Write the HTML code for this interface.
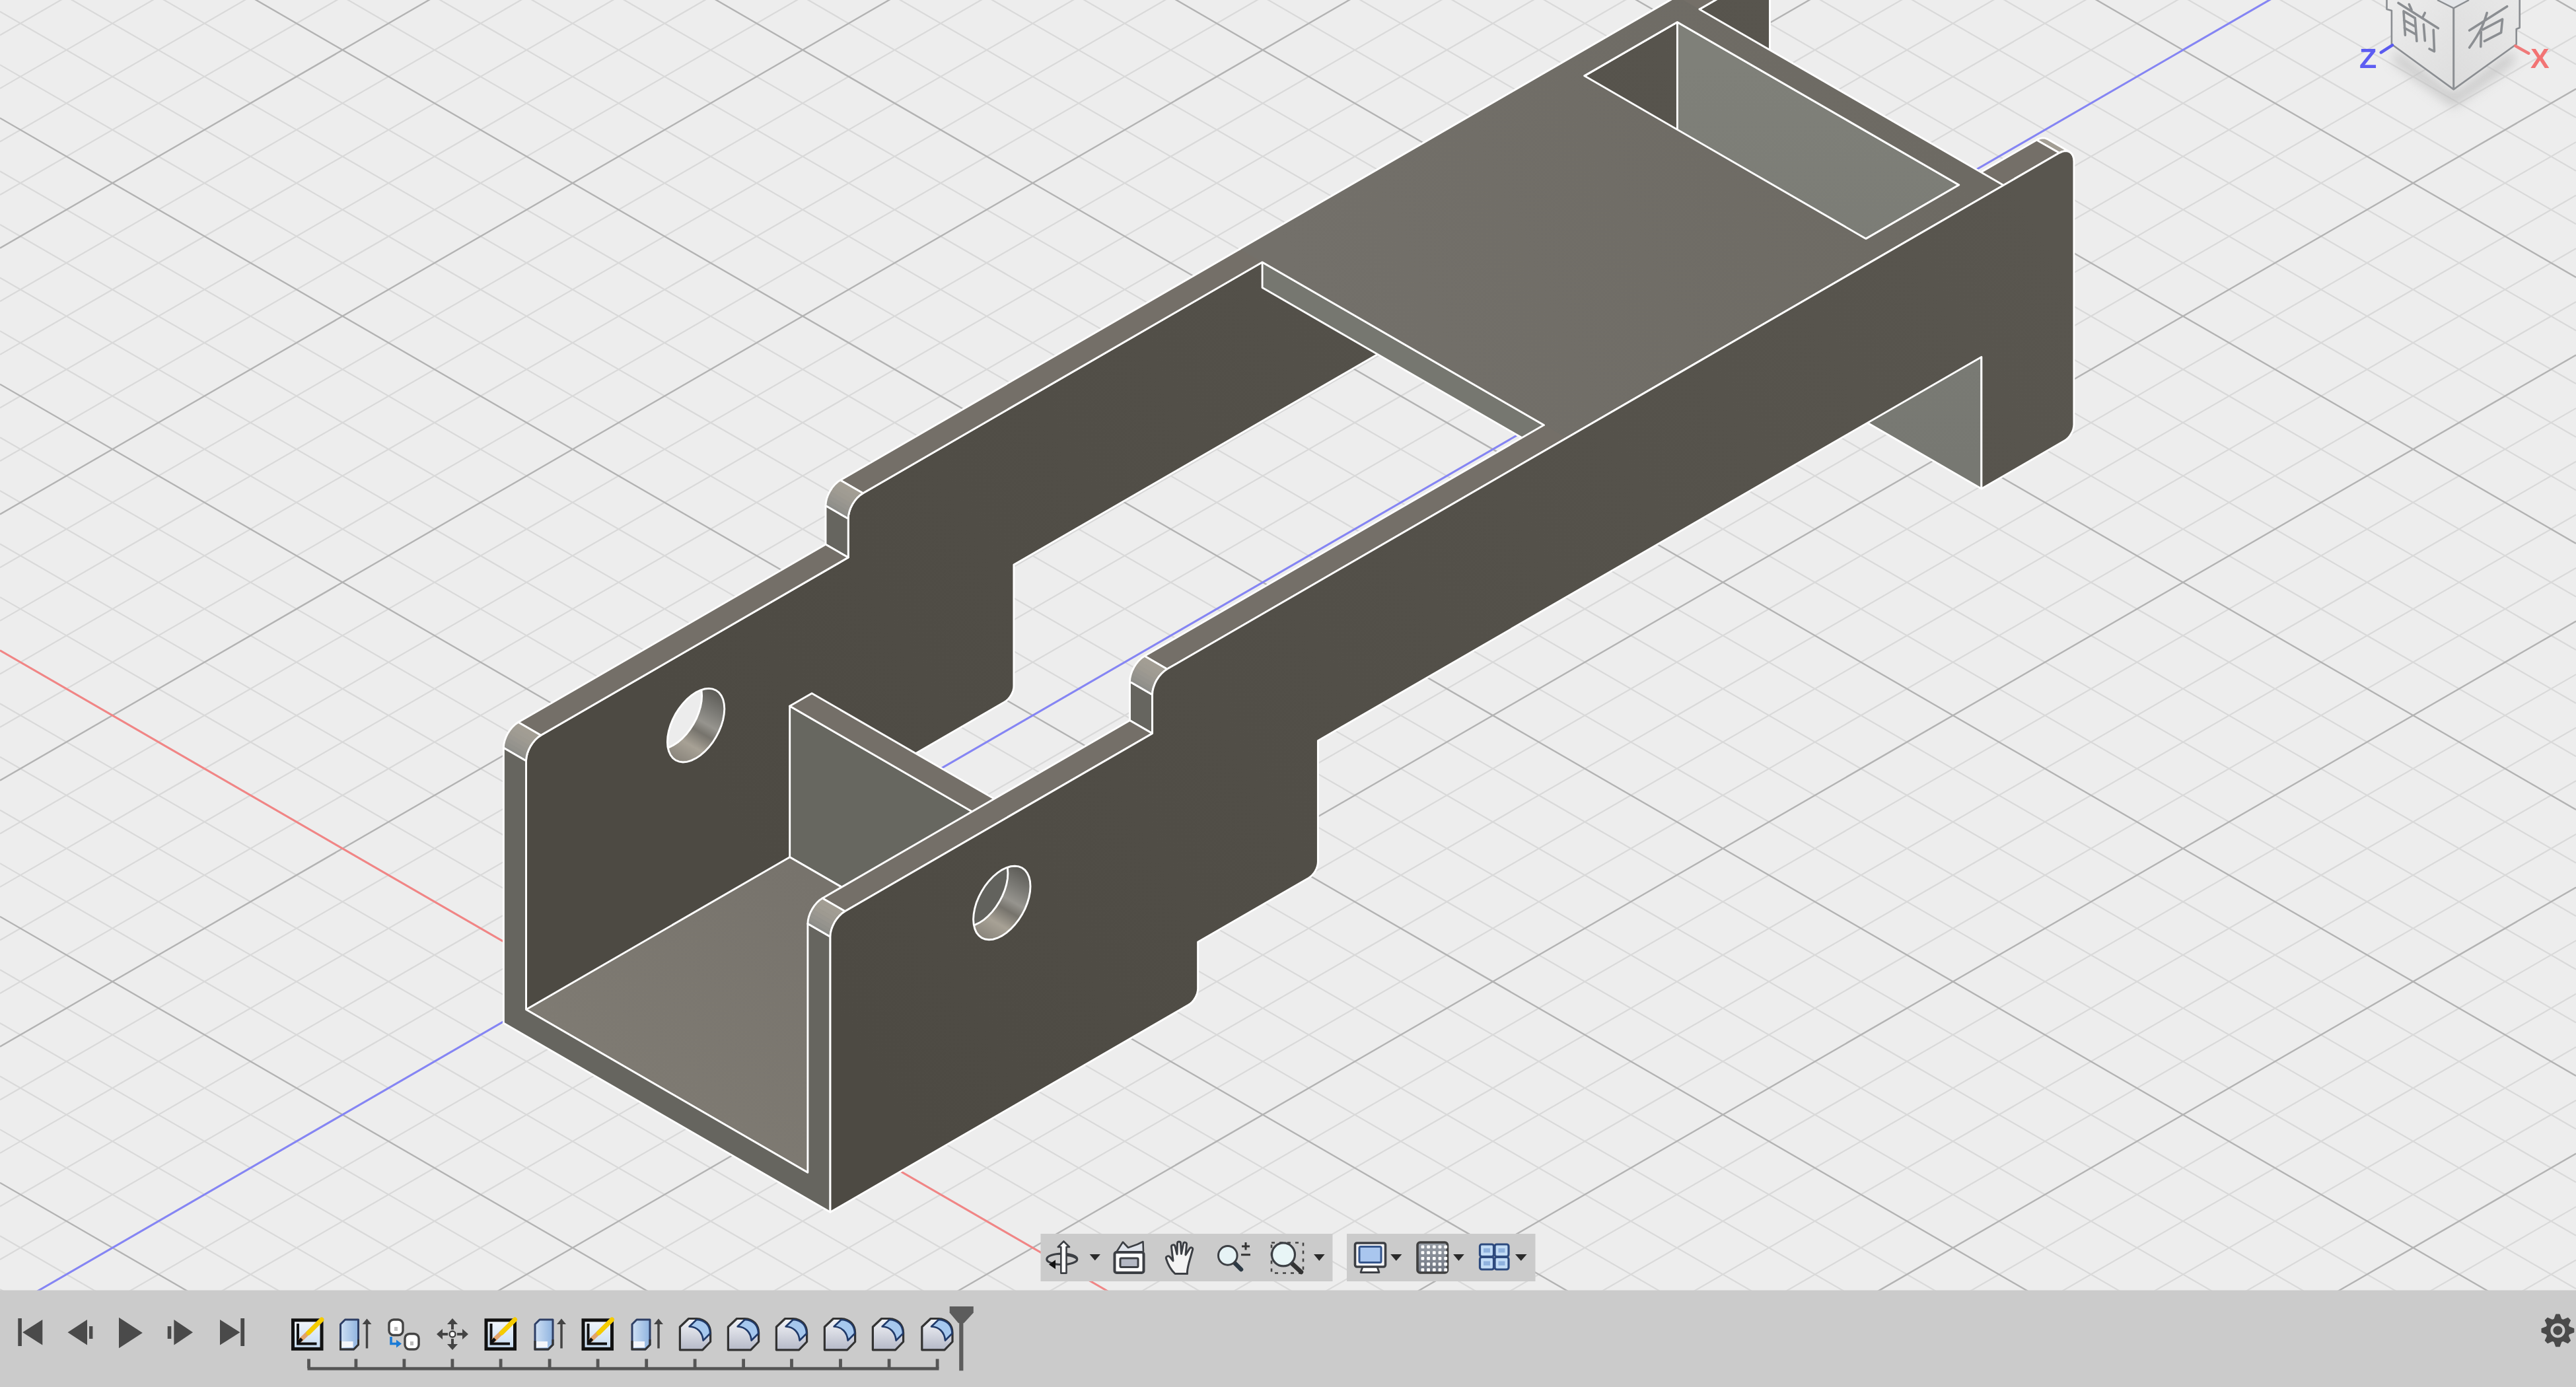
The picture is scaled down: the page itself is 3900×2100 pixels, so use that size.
<!DOCTYPE html><html><head><meta charset="utf-8"><style>html,body{margin:0;padding:0;overflow:hidden;background:#ededed}svg{display:block;filter:blur(0.6px)}</style></head><body><svg width="3900" height="2100" viewBox="0 0 3900 2100"><rect x="0" y="0" width="3900" height="2100" fill="#ededed"/><path d="M0,53.3L3900,-2202.9M0,133.9L3900,-2122.3M0,214.5L3900,-2041.7M0,295.1L3900,-1961.1M0,456.3L3900,-1799.9M0,536.9L3900,-1719.3M0,617.5L3900,-1638.7M0,698.1L3900,-1558.1M0,859.3L3900,-1396.9M0,939.9L3900,-1316.3M0,1020.5L3900,-1235.7M0,1101.1L3900,-1155.1M0,1262.3L3900,-993.9M0,1342.9L3900,-913.3M0,1423.5L3900,-832.7M0,1504.1L3900,-752.1M0,1665.3L3900,-590.9M0,1745.9L3900,-510.3M0,1826.5L3900,-429.7M0,1907.1L3900,-349.1M0,2068.3L3900,-187.9M0,2148.9L3900,-107.3M0,2229.5L3900,-26.7M0,2310.1L3900,53.9M0,2471.3L3900,215.1M0,2551.9L3900,295.7M0,2632.5L3900,376.3M0,2713.1L3900,456.9M0,2874.3L3900,618.1M0,2954.9L3900,698.7M0,3035.5L3900,779.3M0,3116.1L3900,859.9M0,3277.3L3900,1021.1M0,3357.9L3900,1101.7M0,3438.5L3900,1182.3M0,3519.1L3900,1262.9M0,3680.3L3900,1424.1M0,3760.9L3900,1504.7M0,3841.5L3900,1585.3M0,3922.1L3900,1665.9M0,4083.3L3900,1827.1M0,4163.9L3900,1907.7M0,4244.5L3900,1988.3M0,4325.1L3900,2068.9M0,-2158.7L3900,97.5M0,-2078.1L3900,178.1M0,-1997.5L3900,258.7M0,-1916.9L3900,339.3M0,-1755.7L3900,500.5M0,-1675.1L3900,581.1M0,-1594.5L3900,661.7M0,-1513.9L3900,742.3M0,-1352.7L3900,903.5M0,-1272.1L3900,984.1M0,-1191.5L3900,1064.7M0,-1110.9L3900,1145.3M0,-949.7L3900,1306.5M0,-869.1L3900,1387.1M0,-788.5L3900,1467.7M0,-707.9L3900,1548.3M0,-546.7L3900,1709.5M0,-466.1L3900,1790.1M0,-385.5L3900,1870.7M0,-304.9L3900,1951.3M0,-143.7L3900,2112.5M0,-63.1L3900,2193.1M0,17.5L3900,2273.7M0,98.1L3900,2354.3M0,259.3L3900,2515.5M0,339.9L3900,2596.1M0,420.5L3900,2676.7M0,501.1L3900,2757.3M0,662.3L3900,2918.5M0,742.9L3900,2999.1M0,823.5L3900,3079.7M0,904.1L3900,3160.3M0,1065.3L3900,3321.5M0,1145.9L3900,3402.1M0,1226.5L3900,3482.7M0,1307.1L3900,3563.3M0,1468.3L3900,3724.5M0,1548.9L3900,3805.1M0,1629.5L3900,3885.7M0,1710.1L3900,3966.3M0,1871.3L3900,4127.5M0,1951.9L3900,4208.1M0,2032.5L3900,4288.7" stroke="#d9d9d9" stroke-width="2.2" fill="none"/><path d="M0,375.7L3900,-1880.5M0,778.7L3900,-1477.5M0,1181.7L3900,-1074.5M0,1584.7L3900,-671.5M0,1987.7L3900,-268.5M0,2390.7L3900,134.5M0,2793.7L3900,537.5M0,3196.7L3900,940.5M0,3599.7L3900,1343.5M0,4002.7L3900,1746.5M0,-2239.3L3900,16.9M0,-1836.3L3900,419.9M0,-1433.3L3900,822.9M0,-1030.3L3900,1225.9M0,-627.3L3900,1628.9M0,-224.3L3900,2031.9M0,178.7L3900,2434.9M0,581.7L3900,2837.9M0,984.7L3900,3240.9M0,1387.7L3900,3643.9M0,1790.7L3900,4046.9" stroke="#b3b3b3" stroke-width="2.4" fill="none"/><line x1="0" y1="984.7" x2="3900" y2="3240.9" stroke="#f28585" stroke-width="3"/><line x1="0" y1="1987.7" x2="3900" y2="-268.5" stroke="#8585f5" stroke-width="3"/><defs><linearGradient id="gside" gradientUnits="userSpaceOnUse" x1="1250" y1="1500" x2="3130" y2="420"><stop offset="0" stop-color="#4d4a43"/><stop offset="1" stop-color="#59564f"/></linearGradient><linearGradient id="gplate" gradientUnits="userSpaceOnUse" x1="2000" y1="500" x2="2900" y2="100"><stop offset="0" stop-color="#73706a"/><stop offset="1" stop-color="#6d6a63"/></linearGradient><linearGradient id="gfloor" gradientUnits="userSpaceOnUse" x1="1197" y1="1303" x2="900" y2="1650"><stop offset="0" stop-color="#77736c"/><stop offset="1" stop-color="#7f7b73"/></linearGradient><linearGradient id="gback" gradientUnits="userSpaceOnUse" x1="0" y1="100" x2="0" y2="700"><stop offset="0" stop-color="#7f8079"/><stop offset="1" stop-color="#777872"/></linearGradient><linearGradient id="hg1" gradientUnits="userSpaceOnUse" x1="1083.6" y1="1046.2" x2="1023.6" y2="1150.1"><stop offset="0" stop-color="#5c5b56"/><stop offset="0.25" stop-color="#7d7c77"/><stop offset="0.42" stop-color="#96948e"/><stop offset="0.55" stop-color="#76736c"/><stop offset="0.75" stop-color="#a7a195"/><stop offset="1" stop-color="#8a857c"/></linearGradient><clipPath id="hc1"><polygon points="1096.8,1073.2 1096.2,1065.7 1094.7,1059.0 1092.1,1053.3 1088.5,1048.6 1084.1,1045.2 1079.0,1043.1 1073.2,1042.4 1066.9,1043.0 1060.3,1045.0 1053.6,1048.3 1046.8,1052.8 1040.2,1058.5 1034.0,1065.1 1028.2,1072.5 1023.0,1080.6 1018.6,1089.1 1015.1,1097.8 1012.5,1106.5 1010.9,1115.1 1010.4,1123.2 1010.9,1130.7 1012.5,1137.4 1015.1,1143.1 1018.6,1147.7 1023.0,1151.1 1028.2,1153.2 1034.0,1154.0 1040.2,1153.4 1046.8,1151.4 1053.6,1148.1 1060.3,1143.6 1066.9,1137.9 1073.2,1131.3 1079.0,1123.9 1084.1,1115.8 1088.5,1107.3 1092.1,1098.6 1094.7,1089.8 1096.2,1081.3"/></clipPath><linearGradient id="hg2" gradientUnits="userSpaceOnUse" x1="1546.8" y1="1315.0" x2="1486.8" y2="1418.9"><stop offset="0" stop-color="#5c5b56"/><stop offset="0.25" stop-color="#7d7c77"/><stop offset="0.42" stop-color="#96948e"/><stop offset="0.55" stop-color="#76736c"/><stop offset="0.75" stop-color="#a7a195"/><stop offset="1" stop-color="#8a857c"/></linearGradient><clipPath id="hc2"><polygon points="1560.0,1342.0 1559.5,1334.5 1557.9,1327.8 1555.3,1322.1 1551.8,1317.4 1547.4,1314.0 1542.2,1311.9 1536.4,1311.2 1530.2,1311.8 1523.6,1313.8 1516.8,1317.1 1510.1,1321.6 1503.5,1327.2 1497.2,1333.9 1491.4,1341.3 1486.3,1349.4 1481.9,1357.9 1478.3,1366.6 1475.8,1375.3 1474.2,1383.9 1473.6,1392.0 1474.2,1399.5 1475.8,1406.2 1478.3,1411.9 1481.9,1416.5 1486.3,1419.9 1491.4,1422.0 1497.2,1422.8 1503.5,1422.2 1510.1,1420.2 1516.8,1416.9 1523.6,1412.4 1530.2,1406.7 1536.4,1400.1 1542.2,1392.7 1547.4,1384.6 1551.8,1376.1 1555.3,1367.4 1557.9,1358.6 1559.5,1350.1"/></clipPath></defs><polygon points="796.5,1568.8 1339.2,1254.9 1341.9,1253.0 1344.5,1250.6 1346.9,1247.7 1349.0,1244.5 1350.8,1241.0 1352.1,1237.5 1352.9,1234.0 1353.1,1230.7 1353.1,1159.9 1521.0,1062.8 1523.7,1060.9 1526.3,1058.5 1528.7,1055.6 1530.9,1052.4 1532.6,1048.9 1533.9,1045.4 1534.7,1041.9 1534.9,1038.6 1534.9,855.1 2539.4,274.0 2539.4,473.6 2665.5,400.6 2668.2,398.8 2670.9,396.3 2673.3,393.5 2675.4,390.2 2677.1,386.8 2678.4,383.3 2679.2,379.8 2679.5,376.5 2679.5,-21.9 2679.0,-26.7 2677.8,-30.8 2675.7,-34.0 2672.9,-36.3 2669.5,-37.6 2665.7,-37.7 2661.5,-36.8 2657.2,-34.7 1306.5,746.7 1302.1,749.7 1297.9,753.6 1294.1,758.2 1290.7,763.3 1287.9,768.8 1285.9,774.5 1284.6,780.1 1284.2,785.3 1284.2,844.1 818.8,1113.3 814.5,1116.3 810.3,1120.2 806.5,1124.8 803.1,1129.9 800.3,1135.4 798.2,1141.1 797.0,1146.7 796.5,1151.9 796.5,1568.8" fill="url(#gside)" stroke="#ffffff" stroke-width="2.9" stroke-linejoin="round" /><polygon points="2638.8,-56.1 2635.4,-57.3 2669.5,-37.6 2672.9,-36.3" fill="#9e9a91" stroke="#9e9a91" stroke-width="1" /><polygon points="2635.4,-57.3 2631.6,-57.5 2665.7,-37.7 2669.5,-37.6" fill="#a09c93" stroke="#a09c93" stroke-width="1" /><polygon points="2631.6,-57.5 2627.4,-56.5 2661.5,-36.8 2665.7,-37.7" fill="#a29d93" stroke="#a29d93" stroke-width="1" /><polygon points="2627.4,-56.5 2623.0,-54.5 2657.2,-34.7 2661.5,-36.8" fill="#a39e94" stroke="#a39e94" stroke-width="1" /><polygon points="2638.8,-56.1 2635.4,-57.3 2631.6,-57.5 2627.4,-56.5 2623.0,-54.5 2657.2,-34.7 2661.5,-36.8 2665.7,-37.7 2669.5,-37.6 2672.9,-36.3" fill="none" stroke="#ffffff" stroke-width="2.9" stroke-linejoin="round"/><polygon points="2623.0,-54.5 1272.3,726.9 1306.5,746.7 2657.2,-34.7" fill="#746f68" stroke="#ffffff" stroke-width="2.9" stroke-linejoin="round" /><polygon points="1250.0,765.6 1250.0,824.3 1284.2,844.1 1284.2,785.3" fill="#66655f" stroke="#ffffff" stroke-width="2.9" stroke-linejoin="round" /><polygon points="1272.3,726.9 1268.0,729.9 1302.1,749.7 1306.5,746.7" fill="#a39e94" stroke="#a39e94" stroke-width="1" /><polygon points="1268.0,729.9 1263.8,733.8 1297.9,753.6 1302.1,749.7" fill="#a29d93" stroke="#a29d93" stroke-width="1" /><polygon points="1263.8,733.8 1259.9,738.4 1294.1,758.2 1297.9,753.6" fill="#a09c93" stroke="#a09c93" stroke-width="1" /><polygon points="1259.9,738.4 1256.6,743.6 1290.7,763.3 1294.1,758.2" fill="#9e9a91" stroke="#9e9a91" stroke-width="1" /><polygon points="1256.6,743.6 1253.8,749.1 1287.9,768.8 1290.7,763.3" fill="#9a9790" stroke="#9a9790" stroke-width="1" /><polygon points="1253.8,749.1 1251.7,754.7 1285.9,774.5 1287.9,768.8" fill="#96948e" stroke="#96948e" stroke-width="1" /><polygon points="1251.7,754.7 1250.5,760.3 1284.6,780.1 1285.9,774.5" fill="#92918b" stroke="#92918b" stroke-width="1" /><polygon points="1250.5,760.3 1250.0,765.6 1284.2,785.3 1284.6,780.1" fill="#8d8d89" stroke="#8d8d89" stroke-width="1" /><polygon points="1272.3,726.9 1268.0,729.9 1263.8,733.8 1259.9,738.4 1256.6,743.6 1253.8,749.1 1251.7,754.7 1250.5,760.3 1250.0,765.6 1284.2,785.3 1284.6,780.1 1285.9,774.5 1287.9,768.8 1290.7,763.3 1294.1,758.2 1297.9,753.6 1302.1,749.7 1306.5,746.7" fill="none" stroke="#ffffff" stroke-width="2.9" stroke-linejoin="round"/><polygon points="1250.0,824.3 784.7,1093.5 818.8,1113.3 1284.2,844.1" fill="#746f68" stroke="#ffffff" stroke-width="2.9" stroke-linejoin="round" /><polygon points="784.7,1093.5 780.4,1096.5 814.5,1116.3 818.8,1113.3" fill="#a39e94" stroke="#a39e94" stroke-width="1" /><polygon points="780.4,1096.5 776.2,1100.4 810.3,1120.2 814.5,1116.3" fill="#a29d93" stroke="#a29d93" stroke-width="1" /><polygon points="776.2,1100.4 772.3,1105.0 806.5,1124.8 810.3,1120.2" fill="#a09c93" stroke="#a09c93" stroke-width="1" /><polygon points="772.3,1105.0 768.9,1110.2 803.1,1129.9 806.5,1124.8" fill="#9e9a91" stroke="#9e9a91" stroke-width="1" /><polygon points="768.9,1110.2 766.2,1115.7 800.3,1135.4 803.1,1129.9" fill="#9a9790" stroke="#9a9790" stroke-width="1" /><polygon points="766.2,1115.7 764.1,1121.3 798.2,1141.1 800.3,1135.4" fill="#96948e" stroke="#96948e" stroke-width="1" /><polygon points="764.1,1121.3 762.8,1126.9 797.0,1146.7 798.2,1141.1" fill="#92918b" stroke="#92918b" stroke-width="1" /><polygon points="762.8,1126.9 762.4,1132.2 796.5,1151.9 797.0,1146.7" fill="#8d8d89" stroke="#8d8d89" stroke-width="1" /><polygon points="784.7,1093.5 780.4,1096.5 776.2,1100.4 772.3,1105.0 768.9,1110.2 766.2,1115.7 764.1,1121.3 762.8,1126.9 762.4,1132.2 796.5,1151.9 797.0,1146.7 798.2,1141.1 800.3,1135.4 803.1,1129.9 806.5,1124.8 810.3,1120.2 814.5,1116.3 818.8,1113.3" fill="none" stroke="#ffffff" stroke-width="2.9" stroke-linejoin="round"/><polygon points="2539.4,33.4 2999.9,299.7 2999.9,740.0 2539.4,473.6" fill="url(#gback)" stroke="#ffffff" stroke-width="2.9" stroke-linejoin="round" /><polygon points="1195.7,1297.7 1195.7,1069.1 1622.0,1315.7 1622.0,1544.3" fill="#676760" stroke="#ffffff" stroke-width="2.9" stroke-linejoin="round" /><polygon points="1195.7,1069.1 1229.1,1049.7 1655.5,1296.4 1622.0,1315.7" fill="#746f68" stroke="#ffffff" stroke-width="2.9" stroke-linejoin="round" /><polygon points="796.5,1528.6 1195.7,1297.7 1622.0,1544.3 1222.9,1775.2" fill="url(#gfloor)" stroke="#ffffff" stroke-width="2.9" stroke-linejoin="round" /><polygon points="762.4,1549.1 1257.0,1835.2 1257.0,1418.3 1222.9,1398.6 1222.9,1775.2 796.5,1528.6 796.5,1151.9 762.4,1132.2" fill="#66655f" stroke="#ffffff" stroke-width="2.9" stroke-linejoin="round" /><polygon points="1911.1,396.9 2337.4,643.5 2337.4,682.1 1911.1,435.5" fill="#767770" stroke="#ffffff" stroke-width="2.9" stroke-linejoin="round" /><polygon points="3099.2,210.3 3095.9,209.1 3130.0,228.8 3133.4,230.1" fill="#9e9a91" stroke="#9e9a91" stroke-width="1" /><polygon points="3095.9,209.1 3092.0,208.9 3126.1,228.7 3130.0,228.8" fill="#a09c93" stroke="#a09c93" stroke-width="1" /><polygon points="3092.0,208.9 3087.8,209.9 3122.0,229.6 3126.1,228.7" fill="#a29d93" stroke="#a29d93" stroke-width="1" /><polygon points="3087.8,209.9 3083.5,211.9 3117.6,231.6 3122.0,229.6" fill="#a39e94" stroke="#a39e94" stroke-width="1" /><polygon points="3099.2,210.3 3095.9,209.1 3092.0,208.9 3087.8,209.9 3083.5,211.9 3117.6,231.6 3122.0,229.6 3126.1,228.7 3130.0,228.8 3133.4,230.1" fill="none" stroke="#ffffff" stroke-width="2.9" stroke-linejoin="round"/><polygon points="3083.5,211.9 1732.8,993.3 1766.9,1013.1 3117.6,231.6" fill="#746f68" stroke="#ffffff" stroke-width="2.9" stroke-linejoin="round" /><polygon points="1710.5,1032.0 1710.5,1090.7 1744.6,1110.5 1744.6,1051.7" fill="#66655f" stroke="#ffffff" stroke-width="2.9" stroke-linejoin="round" /><polygon points="1732.8,993.3 1728.4,996.3 1762.6,1016.1 1766.9,1013.1" fill="#a39e94" stroke="#a39e94" stroke-width="1" /><polygon points="1728.4,996.3 1724.2,1000.2 1758.4,1020.0 1762.6,1016.1" fill="#a29d93" stroke="#a29d93" stroke-width="1" /><polygon points="1724.2,1000.2 1720.4,1004.8 1754.5,1024.6 1758.4,1020.0" fill="#a09c93" stroke="#a09c93" stroke-width="1" /><polygon points="1720.4,1004.8 1717.0,1010.0 1751.1,1029.7 1754.5,1024.6" fill="#9e9a91" stroke="#9e9a91" stroke-width="1" /><polygon points="1717.0,1010.0 1714.2,1015.5 1748.4,1035.2 1751.1,1029.7" fill="#9a9790" stroke="#9a9790" stroke-width="1" /><polygon points="1714.2,1015.5 1712.2,1021.1 1746.3,1040.9 1748.4,1035.2" fill="#96948e" stroke="#96948e" stroke-width="1" /><polygon points="1712.2,1021.1 1710.9,1026.7 1745.0,1046.4 1746.3,1040.9" fill="#92918b" stroke="#92918b" stroke-width="1" /><polygon points="1710.9,1026.7 1710.5,1032.0 1744.6,1051.7 1745.0,1046.4" fill="#8d8d89" stroke="#8d8d89" stroke-width="1" /><polygon points="1732.8,993.3 1728.4,996.3 1724.2,1000.2 1720.4,1004.8 1717.0,1010.0 1714.2,1015.5 1712.2,1021.1 1710.9,1026.7 1710.5,1032.0 1744.6,1051.7 1745.0,1046.4 1746.3,1040.9 1748.4,1035.2 1751.1,1029.7 1754.5,1024.6 1758.4,1020.0 1762.6,1016.1 1766.9,1013.1" fill="none" stroke="#ffffff" stroke-width="2.9" stroke-linejoin="round"/><polygon points="1710.5,1090.7 1245.2,1359.9 1279.3,1379.7 1744.6,1110.5" fill="#746f68" stroke="#ffffff" stroke-width="2.9" stroke-linejoin="round" /><polygon points="1245.2,1359.9 1240.8,1362.9 1274.9,1382.7 1279.3,1379.7" fill="#a39e94" stroke="#a39e94" stroke-width="1" /><polygon points="1240.8,1362.9 1236.6,1366.8 1270.8,1386.6 1274.9,1382.7" fill="#a29d93" stroke="#a29d93" stroke-width="1" /><polygon points="1236.6,1366.8 1232.8,1371.4 1266.9,1391.2 1270.8,1386.6" fill="#a09c93" stroke="#a09c93" stroke-width="1" /><polygon points="1232.8,1371.4 1229.4,1376.6 1263.5,1396.3 1266.9,1391.2" fill="#9e9a91" stroke="#9e9a91" stroke-width="1" /><polygon points="1229.4,1376.6 1226.6,1382.1 1260.8,1401.8 1263.5,1396.3" fill="#9a9790" stroke="#9a9790" stroke-width="1" /><polygon points="1226.6,1382.1 1224.6,1387.7 1258.7,1407.5 1260.8,1401.8" fill="#96948e" stroke="#96948e" stroke-width="1" /><polygon points="1224.6,1387.7 1223.3,1393.3 1257.4,1413.0 1258.7,1407.5" fill="#92918b" stroke="#92918b" stroke-width="1" /><polygon points="1223.3,1393.3 1222.9,1398.6 1257.0,1418.3 1257.4,1413.0" fill="#8d8d89" stroke="#8d8d89" stroke-width="1" /><polygon points="1245.2,1359.9 1240.8,1362.9 1236.6,1366.8 1232.8,1371.4 1229.4,1376.6 1226.6,1382.1 1224.6,1387.7 1223.3,1393.3 1222.9,1398.6 1257.0,1418.3 1257.4,1413.0 1258.7,1407.5 1260.8,1401.8 1263.5,1396.3 1266.9,1391.2 1270.8,1386.6 1274.9,1382.7 1279.3,1379.7" fill="none" stroke="#ffffff" stroke-width="2.9" stroke-linejoin="round"/><path d="M1877.0,377.1 2538.7,-5.7 3033.3,280.4 2371.6,663.3Z M2398.7,114.8 2825.0,361.4 2965.8,280.0 2539.4,33.4Z" fill="url(#gplate)" fill-rule="evenodd"/><polygon points="2398.7,114.8 2825.0,361.4 2965.8,280.0 2539.4,33.4" fill="none" stroke="#ffffff" stroke-width="2.9" stroke-linejoin="round"/><polyline points="1911.1,396.9 2337.4,643.5" fill="none" stroke="#ffffff" stroke-width="2.9" stroke-linejoin="round" stroke-linecap="round"/><polyline points="2371.6,663.3 3033.3,280.4 2572.9,14.0" fill="none" stroke="#ffffff" stroke-width="2.9" stroke-linejoin="round" stroke-linecap="round"/><polyline points="2538.7,-5.7 1877.0,377.1" fill="none" stroke="#ffffff" stroke-width="2.9" stroke-linejoin="round" stroke-linecap="round"/><polygon points="1257.0,1835.2 1799.6,1521.3 1802.4,1519.4 1805.0,1517.0 1807.4,1514.1 1809.5,1510.8 1811.2,1507.4 1812.5,1503.9 1813.3,1500.4 1813.6,1497.1 1813.6,1426.3 1981.5,1329.2 1984.2,1327.3 1986.8,1324.8 1989.2,1322.0 1991.3,1318.7 1993.0,1315.3 1994.3,1311.8 1995.1,1308.3 1995.4,1305.0 1995.4,1121.5 2999.9,540.4 2999.9,740.0 3126.0,667.0 3128.7,665.1 3131.3,662.7 3133.7,659.8 3135.8,656.6 3137.6,653.2 3138.8,649.6 3139.6,646.2 3139.9,642.9 3139.9,244.5 3139.5,239.7 3138.2,235.6 3136.1,232.4 3133.4,230.1 3130.0,228.8 3126.1,228.7 3122.0,229.6 3117.6,231.6 1766.9,1013.1 1762.6,1016.1 1758.4,1020.0 1754.5,1024.6 1751.1,1029.7 1748.4,1035.2 1746.3,1040.9 1745.0,1046.4 1744.6,1051.7 1744.6,1110.5 1279.3,1379.7 1274.9,1382.7 1270.8,1386.6 1266.9,1391.2 1263.5,1396.3 1260.8,1401.8 1258.7,1407.5 1257.4,1413.0 1257.0,1418.3 1257.0,1835.2" fill="url(#gside)" stroke="#ffffff" stroke-width="2.9" stroke-linejoin="round" /><polygon points="1096.8,1073.2 1096.2,1065.7 1094.7,1059.0 1092.1,1053.3 1088.5,1048.6 1084.1,1045.2 1079.0,1043.1 1073.2,1042.4 1066.9,1043.0 1060.3,1045.0 1053.6,1048.3 1046.8,1052.8 1040.2,1058.5 1034.0,1065.1 1028.2,1072.5 1023.0,1080.6 1018.6,1089.1 1015.1,1097.8 1012.5,1106.5 1010.9,1115.1 1010.4,1123.2 1010.9,1130.7 1012.5,1137.4 1015.1,1143.1 1018.6,1147.7 1023.0,1151.1 1028.2,1153.2 1034.0,1154.0 1040.2,1153.4 1046.8,1151.4 1053.6,1148.1 1060.3,1143.6 1066.9,1137.9 1073.2,1131.3 1079.0,1123.9 1084.1,1115.8 1088.5,1107.3 1092.1,1098.6 1094.7,1089.8 1096.2,1081.3" fill="url(#hg1)"/><g clip-path="url(#hc1)"><polygon points="1062.6,1053.5 1062.1,1046.0 1060.5,1039.3 1057.9,1033.5 1054.4,1028.9 1050.0,1025.5 1044.8,1023.4 1039.1,1022.6 1032.8,1023.3 1026.2,1025.2 1019.5,1028.5 1012.7,1033.1 1006.1,1038.7 999.8,1045.3 994.1,1052.8 988.9,1060.8 984.5,1069.3 981.0,1078.1 978.4,1086.8 976.8,1095.3 976.3,1103.4 976.8,1110.9 978.4,1117.6 981.0,1123.4 984.5,1128.0 988.9,1131.4 994.1,1133.5 999.8,1134.2 1006.1,1133.6 1012.7,1131.6 1019.5,1128.3 1026.2,1123.8 1032.8,1118.2 1039.1,1111.6 1044.8,1104.1 1050.0,1096.1 1054.4,1087.6 1057.9,1078.8 1060.5,1070.1 1062.1,1061.6" fill="#ececec" stroke="#ffffff" stroke-width="2.9"/></g><polygon points="1096.8,1073.2 1096.2,1065.7 1094.7,1059.0 1092.1,1053.3 1088.5,1048.6 1084.1,1045.2 1079.0,1043.1 1073.2,1042.4 1066.9,1043.0 1060.3,1045.0 1053.6,1048.3 1046.8,1052.8 1040.2,1058.5 1034.0,1065.1 1028.2,1072.5 1023.0,1080.6 1018.6,1089.1 1015.1,1097.8 1012.5,1106.5 1010.9,1115.1 1010.4,1123.2 1010.9,1130.7 1012.5,1137.4 1015.1,1143.1 1018.6,1147.7 1023.0,1151.1 1028.2,1153.2 1034.0,1154.0 1040.2,1153.4 1046.8,1151.4 1053.6,1148.1 1060.3,1143.6 1066.9,1137.9 1073.2,1131.3 1079.0,1123.9 1084.1,1115.8 1088.5,1107.3 1092.1,1098.6 1094.7,1089.8 1096.2,1081.3" fill="none" stroke="#ffffff" stroke-width="2.9"/><polygon points="1560.0,1342.0 1559.5,1334.5 1557.9,1327.8 1555.3,1322.1 1551.8,1317.4 1547.4,1314.0 1542.2,1311.9 1536.4,1311.2 1530.2,1311.8 1523.6,1313.8 1516.8,1317.1 1510.1,1321.6 1503.5,1327.2 1497.2,1333.9 1491.4,1341.3 1486.3,1349.4 1481.9,1357.9 1478.3,1366.6 1475.8,1375.3 1474.2,1383.9 1473.6,1392.0 1474.2,1399.5 1475.8,1406.2 1478.3,1411.9 1481.9,1416.5 1486.3,1419.9 1491.4,1422.0 1497.2,1422.8 1503.5,1422.2 1510.1,1420.2 1516.8,1416.9 1523.6,1412.4 1530.2,1406.7 1536.4,1400.1 1542.2,1392.7 1547.4,1384.6 1551.8,1376.1 1555.3,1367.4 1557.9,1358.6 1559.5,1350.1" fill="url(#hg2)"/><g clip-path="url(#hc2)"><polygon points="1525.9,1322.2 1525.4,1314.8 1523.8,1308.1 1521.2,1302.3 1517.6,1297.7 1513.2,1294.3 1508.1,1292.2 1502.3,1291.4 1496.0,1292.1 1489.5,1294.0 1482.7,1297.3 1475.9,1301.9 1469.3,1307.5 1463.1,1314.1 1457.3,1321.6 1452.2,1329.6 1447.8,1338.1 1444.2,1346.8 1441.6,1355.6 1440.0,1364.1 1439.5,1372.2 1440.0,1379.7 1441.6,1386.4 1444.2,1392.2 1447.8,1396.8 1452.2,1400.2 1457.3,1402.3 1463.1,1403.0 1469.3,1402.4 1475.9,1400.4 1482.7,1397.1 1489.5,1392.6 1496.0,1387.0 1502.3,1380.4 1508.1,1372.9 1513.2,1364.9 1517.6,1356.4 1521.2,1347.6 1523.8,1338.9 1525.4,1330.4" fill="#62625d" stroke="#ffffff" stroke-width="2.9"/></g><polygon points="1560.0,1342.0 1559.5,1334.5 1557.9,1327.8 1555.3,1322.1 1551.8,1317.4 1547.4,1314.0 1542.2,1311.9 1536.4,1311.2 1530.2,1311.8 1523.6,1313.8 1516.8,1317.1 1510.1,1321.6 1503.5,1327.2 1497.2,1333.9 1491.4,1341.3 1486.3,1349.4 1481.9,1357.9 1478.3,1366.6 1475.8,1375.3 1474.2,1383.9 1473.6,1392.0 1474.2,1399.5 1475.8,1406.2 1478.3,1411.9 1481.9,1416.5 1486.3,1419.9 1491.4,1422.0 1497.2,1422.8 1503.5,1422.2 1510.1,1420.2 1516.8,1416.9 1523.6,1412.4 1530.2,1406.7 1536.4,1400.1 1542.2,1392.7 1547.4,1384.6 1551.8,1376.1 1555.3,1367.4 1557.9,1358.6 1559.5,1350.1" fill="none" stroke="#ffffff" stroke-width="2.9"/><rect x="1575.5" y="1868" width="442" height="72" fill="#cbcbcb"/><rect x="2039" y="1868" width="285.5" height="72" fill="#cbcbcb"/><ellipse cx="1607.8" cy="1906.4" rx="23" ry="8.3" fill="none" stroke="#3c3f44" stroke-width="3.2"/><polygon points="1610.4,1879.5 1619,1888 1614.5,1888 1614.5,1927.6 1606.3,1927.6 1606.3,1888 1601.8,1888" fill="#fff" stroke="#3c3f44" stroke-width="2.6" stroke-linejoin="round"/><polygon points="1588,1914.5 1598,1907.5 1598,1921.5" fill="#111"/><path d="M1614.5,1900.5 A23,8.3 0 0 1 1630.8,1906.4" fill="none" stroke="#3c3f44" stroke-width="3.2"/><polygon points="1649.7,1898.9 1665.9,1898.9 1657.8,1908.6" fill="#2a2a2a"/><path d="M1690,1896 L1700,1880.5 L1708,1889 L1722,1884 L1730.5,1880 L1731,1895" fill="#dfe3ea" stroke="#3c3f44" stroke-width="2.6" stroke-linejoin="round"/><rect x="1687.5" y="1896" width="44" height="31" rx="3" fill="#fff" stroke="#3c3f44" stroke-width="4"/><rect x="1696" y="1905" width="27" height="13.5" rx="1.5" fill="#b4b8c4" stroke="#3c3f44" stroke-width="3"/><path d="M1779,1928.5 C1772,1922 1768,1914 1765.5,1905.5 C1764.5,1902 1769,1900.5 1771.5,1903.5 L1776,1909 L1773.5,1888 C1773,1884.5 1778,1883.5 1779,1887 L1782,1899 L1782.5,1882.5 C1782.5,1879 1787.5,1879 1787.5,1882.5 L1788.5,1898.5 L1791.5,1883.5 C1792,1880 1797,1880.5 1796.5,1884 L1795,1900 L1801,1890.5 C1802.5,1887.5 1807,1889 1805.5,1892.5 L1800,1912 C1798,1920 1797,1925 1797.5,1928.5 Z" fill="#f4f4f4" stroke="#3c3f44" stroke-width="3" stroke-linejoin="round"/><line x1="1867" y1="1910" x2="1879" y2="1922" stroke="#2d3a45" stroke-width="6.5" stroke-linecap="round"/><circle cx="1858.8" cy="1900.9" r="14.3" fill="#e6f3f5" stroke="#3c3f44" stroke-width="3"/><path d="M1879,1899.8 H1893 M1886,1881 V1892.5 M1880,1887 H1892" stroke="#333" stroke-width="3"/><rect x="1925" y="1881.5" width="48" height="46" fill="none" stroke="#444" stroke-width="2.6" stroke-dasharray="5,7"/><line x1="1956" y1="1913" x2="1970" y2="1926" stroke="#333" stroke-width="6.5" stroke-linecap="round"/><circle cx="1943" cy="1899.4" r="17.5" fill="#e8f5f6" stroke="#3c3f44" stroke-width="3.2"/><polygon points="1989.0,1898.9 2005.6,1898.9 1997.3,1909.0" fill="#2a2a2a"/><path d="M2063,1918 L2060,1926.5 H2088 L2085,1918" fill="#fff" stroke="#3c3f44" stroke-width="2.8" stroke-linejoin="round"/><rect x="2051.5" y="1882" width="46" height="36" rx="3" fill="#f6f6f8" stroke="#3c3f44" stroke-width="3.6"/><rect x="2058" y="1887.5" width="33" height="24" rx="2" fill="#a9c6ee" stroke="#34558c" stroke-width="3"/><polygon points="2105.2,1898.9 2122.4,1898.9 2113.8,1909.0" fill="#2a2a2a"/><defs><linearGradient id="gg" x1="0" y1="0" x2="0" y2="1"><stop offset="0" stop-color="#9aa0a8"/><stop offset="1" stop-color="#6e7480"/></linearGradient></defs><rect x="2146" y="1881" width="45.5" height="46" rx="4" fill="url(#gg)" stroke="#404040" stroke-width="3.6"/><rect x="2151.5" y="1885.5" width="4.8" height="4.8" rx="1.2" fill="#fff"/><rect x="2151.5" y="1894.2" width="4.8" height="4.8" rx="1.2" fill="#fff"/><rect x="2151.5" y="1902.9" width="4.8" height="4.8" rx="1.2" fill="#fff"/><rect x="2151.5" y="1911.6" width="4.8" height="4.8" rx="1.2" fill="#fff"/><rect x="2151.5" y="1920.3" width="4.8" height="4.8" rx="1.2" fill="#fff"/><rect x="2160.2" y="1885.5" width="4.8" height="4.8" rx="1.2" fill="#fff"/><rect x="2160.2" y="1894.2" width="4.8" height="4.8" rx="1.2" fill="#fff"/><rect x="2160.2" y="1902.9" width="4.8" height="4.8" rx="1.2" fill="#fff"/><rect x="2160.2" y="1911.6" width="4.8" height="4.8" rx="1.2" fill="#fff"/><rect x="2160.2" y="1920.3" width="4.8" height="4.8" rx="1.2" fill="#fff"/><rect x="2168.9" y="1885.5" width="4.8" height="4.8" rx="1.2" fill="#fff"/><rect x="2168.9" y="1894.2" width="4.8" height="4.8" rx="1.2" fill="#fff"/><rect x="2168.9" y="1902.9" width="4.8" height="4.8" rx="1.2" fill="#fff"/><rect x="2168.9" y="1911.6" width="4.8" height="4.8" rx="1.2" fill="#fff"/><rect x="2168.9" y="1920.3" width="4.8" height="4.8" rx="1.2" fill="#fff"/><rect x="2177.6" y="1885.5" width="4.8" height="4.8" rx="1.2" fill="#fff"/><rect x="2177.6" y="1894.2" width="4.8" height="4.8" rx="1.2" fill="#fff"/><rect x="2177.6" y="1902.9" width="4.8" height="4.8" rx="1.2" fill="#fff"/><rect x="2177.6" y="1911.6" width="4.8" height="4.8" rx="1.2" fill="#fff"/><rect x="2177.6" y="1920.3" width="4.8" height="4.8" rx="1.2" fill="#fff"/><rect x="2186.3" y="1885.5" width="4.8" height="4.8" rx="1.2" fill="#fff"/><rect x="2186.3" y="1894.2" width="4.8" height="4.8" rx="1.2" fill="#fff"/><rect x="2186.3" y="1902.9" width="4.8" height="4.8" rx="1.2" fill="#fff"/><rect x="2186.3" y="1911.6" width="4.8" height="4.8" rx="1.2" fill="#fff"/><rect x="2186.3" y="1920.3" width="4.8" height="4.8" rx="1.2" fill="#fff"/><polygon points="2200.1,1898.9 2216.8,1898.9 2208.4,1909.0" fill="#2a2a2a"/><rect x="2240.5" y="1884.0" width="21" height="18.5" rx="3" fill="#c2dcf6" stroke="#2d4a7e" stroke-width="3.2"/><rect x="2246.0" y="1890.0" width="10" height="6.5" fill="#8fb2de"/><rect x="2240.5" y="1903.5" width="21" height="18.5" rx="3" fill="#c2dcf6" stroke="#2d4a7e" stroke-width="3.2"/><rect x="2246.0" y="1909.5" width="10" height="6.5" fill="#8fb2de"/><rect x="2263.0" y="1884.0" width="21" height="18.5" rx="3" fill="#c2dcf6" stroke="#2d4a7e" stroke-width="3.2"/><rect x="2268.5" y="1890.0" width="10" height="6.5" fill="#8fb2de"/><rect x="2263.0" y="1903.5" width="21" height="18.5" rx="3" fill="#c2dcf6" stroke="#2d4a7e" stroke-width="3.2"/><rect x="2268.5" y="1909.5" width="10" height="6.5" fill="#8fb2de"/><polygon points="2294.0,1898.9 2311.6,1898.9 2302.8,1909.0" fill="#2a2a2a"/><rect x="0" y="1953.5" width="3900" height="146.5" fill="#cbcbcb"/><rect x="27.3" y="1996" width="5.6" height="42" fill="#4a4a4a"/><polygon points="64.3,1998 64.3,2036.6 34.2,2017.3" fill="#4a4a4a"/><polygon points="132,1998 132,2036.6 102.5,2017.3" fill="#4a4a4a"/><rect x="135" y="2008" width="5.4" height="19" fill="#4a4a4a"/><polygon points="180,1994.7 180,2041.3 215.8,2018" fill="#4a4a4a"/><rect x="253.7" y="2008" width="5.6" height="19" fill="#4a4a4a"/><polygon points="263.4,1998 263.4,2036.6 292,2017.3" fill="#4a4a4a"/><polygon points="333,1998 333,2036.6 363.4,2017.3" fill="#4a4a4a"/><rect x="364.3" y="1996" width="5.8" height="42" fill="#4a4a4a"/><defs><linearGradient id="sk" x1="0" y1="0" x2="0" y2="1"><stop offset="0" stop-color="#f2f6fb"/><stop offset="1" stop-color="#c6dcf2"/></linearGradient><linearGradient id="ex" x1="0" y1="0" x2="1" y2="0"><stop offset="0" stop-color="#cfe0f4"/><stop offset="1" stop-color="#8fb3df"/></linearGradient><linearGradient id="fl" x1="0" y1="0" x2="0" y2="1"><stop offset="0" stop-color="#f4f5f8"/><stop offset="1" stop-color="#b5b9c8"/></linearGradient></defs><rect x="443.5" y="1998.8" width="43.5" height="43.5" fill="url(#sk)" stroke="#111" stroke-width="5"/><path d="M451.0,2004 V2034.5 H479.5" fill="none" stroke="#111" stroke-width="4"/><line x1="454.0" y1="2030" x2="486.0" y2="1999" stroke="#e2a36a" stroke-width="6.5"/><line x1="467.0" y1="2018" x2="487.0" y2="1998" stroke="#f5cc00" stroke-width="7" stroke-linecap="round"/><line x1="452.0" y1="2032" x2="457.0" y2="2027" stroke="#111" stroke-width="5"/><path d="M515.5,2005 L522.5,1998 H542.5 V2036 L535.5,2043 H515.5 Z" fill="url(#ex)" stroke="#2e3f66" stroke-width="3" stroke-linejoin="round"/><rect x="517.5" y="2031" width="17" height="9" fill="#f4f6fa"/><path d="M515.5,2030 V2043 H535.5 L542.5,2036 V2028" fill="none" stroke="#333" stroke-width="3"/><line x1="555.5" y1="2001" x2="555.5" y2="2041.5" stroke="#444" stroke-width="3.5"/><polygon points="555.5,1996.5 562.5,2005 548.5,2005" fill="#444"/><rect x="589.0" y="1998" width="21" height="23.5" rx="7" fill="#fff" stroke="#444" stroke-width="3.4"/><rect x="597.0" y="2009" width="5" height="6" fill="#bbb"/><rect x="613.0" y="2019.5" width="21" height="23.5" rx="7" fill="#fff" stroke="#444" stroke-width="3.4"/><rect x="621.0" y="2031" width="5" height="6" fill="#bbb"/><path d="M592.0,2024 V2034.5 H601.0" fill="none" stroke="#1b7bd6" stroke-width="3.6"/><polygon points="600.0,2028.5 608.0,2034.5 600.0,2040.5" fill="#1b7bd6"/><path d="M685.0,2003.0 V2013.0 M685.0,2027.0 V2037.0 M668.0,2020.0 H678.0 M692.0,2020.0 H702.0" stroke="#444" stroke-width="4"/><polygon points="685.0,1996.0 693.0,2005.0 677.0,2005.0" fill="#444"/><polygon points="685.0,2044.0 693.0,2035.0 677.0,2035.0" fill="#444"/><polygon points="661.0,2020.0 670.0,2012.0 670.0,2028.0" fill="#444"/><polygon points="709.0,2020.0 700.0,2012.0 700.0,2028.0" fill="#444"/><circle cx="685.0" cy="2020.0" r="4.5" fill="#fff" stroke="#444" stroke-width="2.5"/><rect x="736.0" y="1998.8" width="43.5" height="43.5" fill="url(#sk)" stroke="#111" stroke-width="5"/><path d="M743.5,2004 V2034.5 H772.0" fill="none" stroke="#111" stroke-width="4"/><line x1="746.5" y1="2030" x2="778.5" y2="1999" stroke="#e2a36a" stroke-width="6.5"/><line x1="759.5" y1="2018" x2="779.5" y2="1998" stroke="#f5cc00" stroke-width="7" stroke-linecap="round"/><line x1="744.5" y1="2032" x2="749.5" y2="2027" stroke="#111" stroke-width="5"/><path d="M810.0,2005 L817.0,1998 H837.0 V2036 L830.0,2043 H810.0 Z" fill="url(#ex)" stroke="#2e3f66" stroke-width="3" stroke-linejoin="round"/><rect x="812.0" y="2031" width="17" height="9" fill="#f4f6fa"/><path d="M810.0,2030 V2043 H830.0 L837.0,2036 V2028" fill="none" stroke="#333" stroke-width="3"/><line x1="850.0" y1="2001" x2="850.0" y2="2041.5" stroke="#444" stroke-width="3.5"/><polygon points="850.0,1996.5 857.0,2005 843.0,2005" fill="#444"/><rect x="883.0" y="1998.8" width="43.5" height="43.5" fill="url(#sk)" stroke="#111" stroke-width="5"/><path d="M890.5,2004 V2034.5 H919.0" fill="none" stroke="#111" stroke-width="4"/><line x1="893.5" y1="2030" x2="925.5" y2="1999" stroke="#e2a36a" stroke-width="6.5"/><line x1="906.5" y1="2018" x2="926.5" y2="1998" stroke="#f5cc00" stroke-width="7" stroke-linecap="round"/><line x1="891.5" y1="2032" x2="896.5" y2="2027" stroke="#111" stroke-width="5"/><path d="M957.0,2005 L964.0,1998 H984.0 V2036 L977.0,2043 H957.0 Z" fill="url(#ex)" stroke="#2e3f66" stroke-width="3" stroke-linejoin="round"/><rect x="959.0" y="2031" width="17" height="9" fill="#f4f6fa"/><path d="M957.0,2030 V2043 H977.0 L984.0,2036 V2028" fill="none" stroke="#333" stroke-width="3"/><line x1="997.0" y1="2001" x2="997.0" y2="2041.5" stroke="#444" stroke-width="3.5"/><polygon points="997.0,1996.5 1004.0,2005 990.0,2005" fill="#444"/><path d="M1029.4,2009 L1042.6,1996.5 H1054.6 C1067.6,1997 1075.6,2006 1075.6,2018 V2031.5 L1063.6,2043.8 H1029.4 Z" fill="url(#fl)" stroke="#333" stroke-width="3.2" stroke-linejoin="round"/><path d="M1043.6,2008.5 L1054.6,1998 C1067.6,1999 1074.6,2007 1075.1,2019 L1064.6,2029.5 C1063.6,2017 1055.6,2009 1043.6,2008.5 Z" fill="#a6c8ee" stroke="#203a6a" stroke-width="2.6" stroke-linejoin="round"/><path d="M1102.4,2009 L1115.6,1996.5 H1127.6 C1140.6,1997 1148.6,2006 1148.6,2018 V2031.5 L1136.6,2043.8 H1102.4 Z" fill="url(#fl)" stroke="#333" stroke-width="3.2" stroke-linejoin="round"/><path d="M1116.6,2008.5 L1127.6,1998 C1140.6,1999 1147.6,2007 1148.1,2019 L1137.6,2029.5 C1136.6,2017 1128.6,2009 1116.6,2008.5 Z" fill="#a6c8ee" stroke="#203a6a" stroke-width="2.6" stroke-linejoin="round"/><path d="M1175.4,2009 L1188.6,1996.5 H1200.6 C1213.6,1997 1221.6,2006 1221.6,2018 V2031.5 L1209.6,2043.8 H1175.4 Z" fill="url(#fl)" stroke="#333" stroke-width="3.2" stroke-linejoin="round"/><path d="M1189.6,2008.5 L1200.6,1998 C1213.6,1999 1220.6,2007 1221.1,2019 L1210.6,2029.5 C1209.6,2017 1201.6,2009 1189.6,2008.5 Z" fill="#a6c8ee" stroke="#203a6a" stroke-width="2.6" stroke-linejoin="round"/><path d="M1248.4,2009 L1261.6,1996.5 H1273.6 C1286.6,1997 1294.6,2006 1294.6,2018 V2031.5 L1282.6,2043.8 H1248.4 Z" fill="url(#fl)" stroke="#333" stroke-width="3.2" stroke-linejoin="round"/><path d="M1262.6,2008.5 L1273.6,1998 C1286.6,1999 1293.6,2007 1294.1,2019 L1283.6,2029.5 C1282.6,2017 1274.6,2009 1262.6,2008.5 Z" fill="#a6c8ee" stroke="#203a6a" stroke-width="2.6" stroke-linejoin="round"/><path d="M1321.4,2009 L1334.6,1996.5 H1346.6 C1359.6,1997 1367.6,2006 1367.6,2018 V2031.5 L1355.6,2043.8 H1321.4 Z" fill="url(#fl)" stroke="#333" stroke-width="3.2" stroke-linejoin="round"/><path d="M1335.6,2008.5 L1346.6,1998 C1359.6,1999 1366.6,2007 1367.1,2019 L1356.6,2029.5 C1355.6,2017 1347.6,2009 1335.6,2008.5 Z" fill="#a6c8ee" stroke="#203a6a" stroke-width="2.6" stroke-linejoin="round"/><path d="M1395.8,2009 L1409.0,1996.5 H1421.0 C1434.0,1997 1442.0,2006 1442.0,2018 V2031.5 L1430.0,2043.8 H1395.8 Z" fill="url(#fl)" stroke="#333" stroke-width="3.2" stroke-linejoin="round"/><path d="M1410.0,2008.5 L1421.0,1998 C1434.0,1999 1441.0,2007 1441.5,2019 L1431.0,2029.5 C1430.0,2017 1422.0,2009 1410.0,2008.5 Z" fill="#a6c8ee" stroke="#203a6a" stroke-width="2.6" stroke-linejoin="round"/><rect x="465.5" y="2069.8" width="956" height="4.8" fill="#555"/><rect x="465.1" y="2057.5" width="4.8" height="14" fill="#555"/><rect x="536.5" y="2057.5" width="4.8" height="14" fill="#555"/><rect x="609.5" y="2057.5" width="4.8" height="14" fill="#555"/><rect x="682.5" y="2057.5" width="4.8" height="14" fill="#555"/><rect x="755.7" y="2057.5" width="4.8" height="14" fill="#555"/><rect x="829.7" y="2057.5" width="4.8" height="14" fill="#555"/><rect x="902.7" y="2057.5" width="4.8" height="14" fill="#555"/><rect x="976.3" y="2057.5" width="4.8" height="14" fill="#555"/><rect x="1049.7" y="2057.5" width="4.8" height="14" fill="#555"/><rect x="1123.2" y="2057.5" width="4.8" height="14" fill="#555"/><rect x="1196.1" y="2057.5" width="4.8" height="14" fill="#555"/><rect x="1270.1" y="2057.5" width="4.8" height="14" fill="#555"/><rect x="1343.7" y="2057.5" width="4.8" height="14" fill="#555"/><rect x="1416.7" y="2057.5" width="4.8" height="14" fill="#555"/><polygon points="1437.7,1977.9 1473.8,1977.9 1473.8,1987.4 1459.3,2003.2 1451,2003.2 1437.7,1987.4" fill="#5c5c5c"/><rect x="1452.2" y="2000" width="6.2" height="75.3" fill="#5c5c5c"/><polygon points="3870.0,1990.5 3874.8,1990.5 3877.5,1997.7 3880.6,1999.0 3887.6,1995.8 3891.0,1999.2 3887.8,2006.2 3889.1,2009.3 3896.3,2012.0 3896.3,2016.8 3889.1,2019.5 3887.8,2022.6 3891.0,2029.6 3887.6,2033.0 3880.6,2029.8 3877.5,2031.1 3874.8,2038.3 3870.0,2038.3 3867.3,2031.1 3864.2,2029.8 3857.2,2033.0 3853.8,2029.6 3857.0,2022.6 3855.7,2019.5 3848.5,2016.8 3848.5,2012.0 3855.7,2009.3 3857.0,2006.2 3853.8,1999.2 3857.2,1995.8 3864.2,1999.0 3867.3,1997.7" fill="#4a4a4a" stroke="#4a4a4a" stroke-width="2" stroke-linejoin="round"/><circle cx="3872.4" cy="2014.4" r="9" fill="none" stroke="#cdcdcd" stroke-width="4"/><defs><filter id="blur" x="-50%" y="-50%" width="200%" height="200%"><feGaussianBlur stdDeviation="9"/></filter><linearGradient id="vcl" x1="0" y1="0" x2="1" y2="1"><stop offset="0" stop-color="#ececec"/><stop offset="1" stop-color="#dedede"/></linearGradient><linearGradient id="vcr" x1="1" y1="0" x2="0" y2="1"><stop offset="0" stop-color="#e8e8e8"/><stop offset="1" stop-color="#dcdcdc"/></linearGradient></defs><polygon points="3625,75 3714.7,142 3806,75 3806,95 3714.7,162 3625,95" fill="#bdbdbd" opacity="0.8" filter="url(#blur)"/><polygon points="3613.5,0 3691.7,0 3714.7,12.4 3714.7,135.4 3620.9,67 3620.9,16 3613.5,14" fill="url(#vcl)"/><polygon points="3736.4,0 3814.7,0 3814.7,42 3809.7,44 3809.7,67 3714.7,135.4 3714.7,12.4" fill="url(#vcr)"/><polygon points="3691.7,0 3736.4,0 3714.7,12.4" fill="#e4e6e9"/><polyline points="3613.5,0 3613.5,14 3620.9,16 3620.9,67 3714.7,135.4 3809.7,67 3809.7,44 3814.7,42 3814.7,0" fill="none" stroke="#8b8e92" stroke-width="2.6" stroke-linejoin="round"/><line x1="3714.7" y1="12.4" x2="3714.7" y2="135.4" stroke="#8b8e92" stroke-width="3"/><polyline points="3690,0 3714.7,12.4 3738,0" fill="none" stroke="#8b8e92" stroke-width="2.4"/><path d="M3631,4.5 L3691.4,42.8 M3647.3,6.5 L3651.1,14.9 M3671.3,19.5 L3667.4,27.3 M3639,17.5 L3641.4,53.2 M3639,17 L3656.3,27.4 L3658.9,62.3 M3639.6,30.5 L3656.6,40.3 M3640.3,42.2 L3657.4,52 M3669.3,37 L3671.3,61.6 M3684.2,45.4 L3685.5,77.9 L3678,74" fill="none" stroke="#8b8e92" stroke-width="3.6" stroke-linecap="round" stroke-linejoin="round"/><path d="M3738.6,46.1 L3795.7,9.7 M3765.2,19.5 C3761,34 3757,46 3738.6,72 M3756.3,48 L3755.8,70.7 M3758.7,44.8 L3788.6,29.2 L3786.6,49.3 M3761.3,62.3 L3786.6,49.3" fill="none" stroke="#8b8e92" stroke-width="3.6" stroke-linecap="round" stroke-linejoin="round"/><line x1="3604.7" y1="79.5" x2="3622" y2="68.3" stroke="#5a5af0" stroke-width="4.5" stroke-linecap="round"/><line x1="3808.4" y1="69.6" x2="3828.3" y2="80.7" stroke="#f07a7a" stroke-width="4.5" stroke-linecap="round"/><text x="3572" y="103.1" font-family="Liberation Sans, sans-serif" font-size="43" font-weight="bold" fill="#5c5cf2">Z</text><text x="3831" y="103.1" font-family="Liberation Sans, sans-serif" font-size="43" font-weight="bold" fill="#f27474">X</text></svg></body></html>
